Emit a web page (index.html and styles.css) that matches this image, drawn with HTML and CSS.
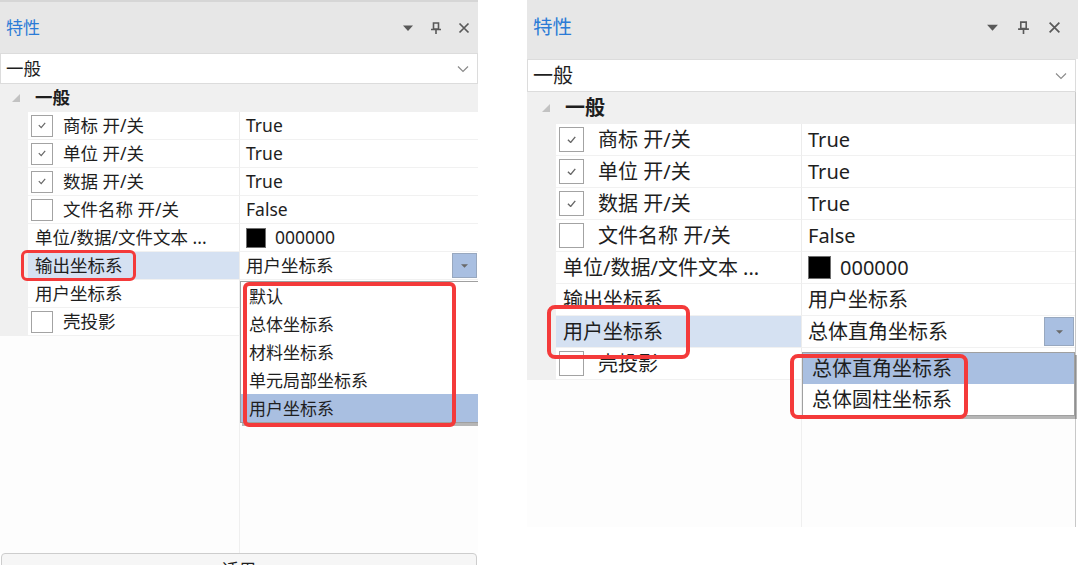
FILE: index.html
```html
<!DOCTYPE html>
<html lang="zh-CN">
<head>
    <meta charset="UTF-8">
    <title>特性</title>
    <link rel="stylesheet" href="styles.css">
</head>
<body>
<div class="page">

    <!-- 左：输出坐标系 -->
    <section class="panel panel-left">
        <div class="panel-head">
            <span class="panel-title">特性</span>
            <span class="head-tools">
                <svg class="tool" viewBox="0 0 12 12"><polygon points="1,3.5 11,3.5 6,9" fill="#595959"/></svg>
                <svg class="tool" viewBox="0 0 12 12"><path d="M3.5 1h5v6h-5z M1 7.5h10 M6 7.5v4.5" fill="none" stroke="#595959" stroke-width="1.6"/></svg>
                <svg class="tool" viewBox="0 0 12 12"><path d="M1.5 1.5l9 9 M10.5 1.5l-9 9" stroke="#595959" stroke-width="1.7"/></svg>
            </span>
        </div>
        <div class="combo">
            <span>一般</span>
            <svg class="chevron" viewBox="0 0 12 8"><polyline points="1,1.5 6,6.5 11,1.5" fill="none" stroke="#8a8a8a" stroke-width="1.2"/></svg>
        </div>
        <div class="grid">
            <div class="group-row">
                <svg class="group-arrow" viewBox="0 0 8 8"><polygon points="8,0 8,8 0,8" fill="#c2c2c2"/></svg>
                <span>一般</span>
            </div>
            <div class="prop-row">
                <div class="prop-name"><span class="check"><svg viewBox="0 0 10 8"><polyline points="1,4 4,7 9,1"/></svg></span>商标 开/关</div>
                <div class="prop-value">True</div>
            </div>
            <div class="prop-row">
                <div class="prop-name"><span class="check"><svg viewBox="0 0 10 8"><polyline points="1,4 4,7 9,1"/></svg></span>单位 开/关</div>
                <div class="prop-value">True</div>
            </div>
            <div class="prop-row">
                <div class="prop-name"><span class="check"><svg viewBox="0 0 10 8"><polyline points="1,4 4,7 9,1"/></svg></span>数据 开/关</div>
                <div class="prop-value">True</div>
            </div>
            <div class="prop-row">
                <div class="prop-name"><span class="check"></span>文件名称 开/关</div>
                <div class="prop-value">False</div>
            </div>
            <div class="prop-row">
                <div class="prop-name plain">单位/数据/文件文本 ...</div>
                <div class="prop-value"><span class="swatch"></span>000000</div>
            </div>
            <div class="prop-row selected">
                <div class="prop-name plain">输出坐标系</div>
                <div class="prop-value">
                    <span>用户坐标系</span>
                    <span class="dd-btn"><svg viewBox="0 0 8 4"><polygon points="0,0 8,0 4,4" fill="#6a6a6a"/></svg></span>
                </div>
            </div>
            <div class="prop-row">
                <div class="prop-name plain">用户坐标系</div>
                <div class="prop-value"></div>
            </div>
            <div class="prop-row">
                <div class="prop-name"><span class="check"></span>壳投影</div>
                <div class="prop-value"></div>
            </div>
        </div>
        <div class="grid-fill">
            <div class="fill-name"></div>
            <div class="fill-value"></div>
        </div>
        <div class="apply-bar"><button class="apply-btn">适用</button></div>

        <div class="dropdown-list">
            <div class="dd-item">默认</div>
            <div class="dd-item">总体坐标系</div>
            <div class="dd-item">材料坐标系</div>
            <div class="dd-item">单元局部坐标系</div>
            <div class="dd-item active">用户坐标系</div>
        </div>

        <div class="mark mark-l-label"></div>
        <div class="mark mark-l-list"></div>
    </section>

    <!-- 右：用户坐标系 -->
    <section class="panel panel-right">
        <div class="panel-head">
            <span class="panel-title">特性</span>
            <span class="head-tools">
                <svg class="tool" viewBox="0 0 12 12"><polygon points="1,3.5 11,3.5 6,9" fill="#595959"/></svg>
                <svg class="tool" viewBox="0 0 12 12"><path d="M3.5 1h5v6h-5z M1 7.5h10 M6 7.5v4.5" fill="none" stroke="#595959" stroke-width="1.5"/></svg>
                <svg class="tool" viewBox="0 0 12 12"><path d="M1.5 1.5l9 9 M10.5 1.5l-9 9" stroke="#595959" stroke-width="1.6"/></svg>
            </span>
        </div>
        <div class="combo">
            <span>一般</span>
            <svg class="chevron" viewBox="0 0 12 8"><polyline points="1,1.5 6,6.5 11,1.5" fill="none" stroke="#8a8a8a" stroke-width="1.1"/></svg>
        </div>
        <div class="grid">
            <div class="group-row">
                <svg class="group-arrow" viewBox="0 0 8 8"><polygon points="8,0 8,8 0,8" fill="#c2c2c2"/></svg>
                <span>一般</span>
            </div>
            <div class="prop-row">
                <div class="prop-name"><span class="check"><svg viewBox="0 0 10 8"><polyline points="1,4 4,7 9,1"/></svg></span>商标 开/关</div>
                <div class="prop-value">True</div>
            </div>
            <div class="prop-row">
                <div class="prop-name"><span class="check"><svg viewBox="0 0 10 8"><polyline points="1,4 4,7 9,1"/></svg></span>单位 开/关</div>
                <div class="prop-value">True</div>
            </div>
            <div class="prop-row">
                <div class="prop-name"><span class="check"><svg viewBox="0 0 10 8"><polyline points="1,4 4,7 9,1"/></svg></span>数据 开/关</div>
                <div class="prop-value">True</div>
            </div>
            <div class="prop-row">
                <div class="prop-name"><span class="check"></span>文件名称 开/关</div>
                <div class="prop-value">False</div>
            </div>
            <div class="prop-row">
                <div class="prop-name plain">单位/数据/文件文本 ...</div>
                <div class="prop-value"><span class="swatch"></span>000000</div>
            </div>
            <div class="prop-row">
                <div class="prop-name plain">输出坐标系</div>
                <div class="prop-value">用户坐标系</div>
            </div>
            <div class="prop-row selected">
                <div class="prop-name plain">用户坐标系</div>
                <div class="prop-value">
                    <span>总体直角坐标系</span>
                    <span class="dd-btn"><svg viewBox="0 0 8 4"><polygon points="0,0 8,0 4,4" fill="#6a6a6a"/></svg></span>
                </div>
            </div>
            <div class="prop-row">
                <div class="prop-name"><span class="check"></span>壳投影</div>
                <div class="prop-value"></div>
            </div>
        </div>
        <div class="grid-fill">
            <div class="fill-name"></div>
            <div class="fill-value"></div>
        </div>

        <div class="dropdown-list">
            <div class="dd-item active">总体直角坐标系</div>
            <div class="dd-item">总体圆柱坐标系</div>
        </div>

        <div class="mark mark-r-label"></div>
        <div class="mark mark-r-list"></div>
    </section>

</div>
</body>
</html>
```

FILE: styles.css
```css
* {
    box-sizing: border-box;
}
body {
    margin: 0;
    background: #fff;
    font-family: "Noto Sans", "Noto Sans CJK SC", sans-serif;
    color: #1e1e1e;
}
.page {
    display: flex;
    align-items: flex-start;
    gap: 49px;
    width: 1080px;
    height: 565px;
    overflow: hidden;
}

/* panel sizes: left shot is smaller than the right one */
.panel {
    position: relative;
    display: flex;
    flex-direction: column;
    flex-shrink: 0;
    overflow: hidden;
    font-size: var(--fs);
    line-height: 1;
}
.panel-left {
    width: 478px;
    height: 585px;
    --head: 53px;
    --head-pb: 0px;
    --title: 17px;
    --tool: 12px;
    --tool-gap: 16px;
    --tool-pr: 8px;
    --combo: 31px;
    --row: 28px;
    --fs: 17.5px;
    --gutter: 28px;
    --name: 212px;
    --check: 22px;
    --check-gap: 10px;
    --edge: 0px;
    --swatch: 20px;
    --btn-w: 25px;
    --btn-h: 25px;
}
.panel-right {
    width: 551px;
    height: 527px;
    --head: 59px;
    --head-pb: 5px;
    --title: 19.5px;
    --tool: 13px;
    --tool-gap: 18px;
    --tool-pr: 17px;
    --combo: 33px;
    --row: 32px;
    --fs: 20px;
    --gutter: 29px;
    --name: 246px;
    --check: 25px;
    --check-gap: 14px;
    --edge: 2px;
    --swatch: 23px;
    --btn-w: 30px;
    --btn-h: 29px;
}

/* header */
.panel-head {
    height: var(--head);
    flex-shrink: 0;
    display: flex;
    align-items: center;
    justify-content: space-between;
    padding: 0 var(--tool-pr) var(--head-pb) 6px;
    background: #e7e7e7;
}
.panel-left .panel-head {
    border-top: 2px solid #d6d6d6;
}
.panel-title {
    color: #2b7bd6;
    font-size: var(--title);
}
.head-tools {
    display: flex;
    align-items: center;
    gap: var(--tool-gap);
}
.tool {
    width: var(--tool);
    height: var(--tool);
}

/* category combo */
.combo {
    height: var(--combo);
    flex-shrink: 0;
    margin-right: var(--edge);
    display: flex;
    align-items: center;
    justify-content: space-between;
    padding: 0 8px 0 5px;
    background: #fff;
    border: 1px solid #dcdcdc;
}
.chevron {
    width: 12px;
    height: 8px;
}

/* property grid */
.grid {
    flex-shrink: 0;
    margin-right: var(--edge);
    background: #f0f0f0;
}
.panel-right .grid,
.panel-right .grid-fill {
    border-right: 1px solid #c8c8c8;
}
.group-row {
    height: var(--row);
    display: flex;
    align-items: center;
    gap: 15px;
    padding-left: 12px;
    font-weight: bold;
}
.panel-right .group-row {
    padding-left: 15px;
}
.group-arrow {
    width: 8px;
    height: 8px;
}
.prop-row {
    height: var(--row);
    display: flex;
    padding-left: var(--gutter);
}
.prop-name {
    width: var(--name);
    display: flex;
    align-items: center;
    gap: var(--check-gap);
    padding-left: 3px;
    background: #fff;
    border-right: 1px solid #ececec;
    border-bottom: 1px solid #f1f1f1;
    white-space: nowrap;
}
.prop-name.plain {
    padding-left: 7px;
}
.prop-value {
    flex: 1;
    display: flex;
    align-items: center;
    justify-content: space-between;
    padding: 0 1px 0 6px;
    background: #fff;
    border-bottom: 1px solid #f1f1f1;
}
.selected .prop-name {
    background: #d5e1f2;
}
.check {
    width: var(--check);
    height: var(--check);
    display: flex;
    align-items: center;
    justify-content: center;
    border: 1px solid #a3a3a3;
    background: #fff;
}
.check svg {
    width: 40%;
    height: 32%;
    fill: none;
    stroke: #666;
    stroke-width: 1.5;
}
.swatch {
    width: var(--swatch);
    height: var(--swatch);
    margin-right: 9px;
    background: #000;
    border: 1px solid #6f6f6f;
}
.prop-value:has(.swatch) {
    justify-content: flex-start;
}
.dd-btn {
    width: var(--btn-w);
    height: var(--btn-h);
    display: flex;
    align-items: center;
    justify-content: center;
    background: #a9bfe1;
    border: 1px solid #98a8bf;
}
.dd-btn svg {
    width: 7px;
    height: 4px;
}

/* empty area under the rows */
.grid-fill {
    flex: 1;
    display: flex;
    margin-right: var(--edge);
    background: #fdfdfd;
}
.fill-name {
    width: calc(var(--gutter) + var(--name));
    border-right: 1px solid #efefef;
}
.apply-bar {
    height: 32px;
    flex-shrink: 0;
    padding: 0 1px;
}
.apply-btn {
    width: 100%;
    height: 30px;
    padding: 0;
    border: 1px solid #cdcdcd;
    border-radius: 4px;
    background: #f6f6f6;
    font-family: inherit;
    font-size: 17px;
    color: #1e1e1e;
}

/* open drop-down */
.dropdown-list {
    position: absolute;
    background: #fff;
    border: 1px solid #a0a0a0;
    box-shadow: 2px 3px 0 rgba(0, 0, 0, 0.28);
}
.panel-left .dropdown-list {
    left: 240px;
    top: 281px;
    width: 242px;
    font-size: 17px;
}
.panel-right .dropdown-list {
    left: 275px;
    top: 352px;
    width: 273px;
    font-size: 20px;
}
.dd-item {
    height: var(--row);
    display: flex;
    align-items: center;
    padding-left: 8px;
}
.panel-right .dd-item {
    height: 31px;
    padding-left: 9px;
}
.dd-item.active {
    background: #a9bfe1;
}

/* red annotation frames */
.mark {
    position: absolute;
    border: 3px solid #f43a3a;
    border-radius: 6px;
}
.mark-l-label {
    left: 21px;
    top: 250px;
    width: 115px;
    height: 31px;
}
.mark-l-list {
    left: 243px;
    top: 282px;
    width: 213px;
    height: 145px;
    border-width: 4px;
}
.mark-r-label {
    left: 20px;
    top: 305px;
    width: 143px;
    height: 54px;
    border-width: 4px;
    border-radius: 8px;
}
.mark-r-list {
    left: 263px;
    top: 354px;
    width: 178px;
    height: 65px;
    border-width: 4px;
    border-radius: 8px;
}
```
